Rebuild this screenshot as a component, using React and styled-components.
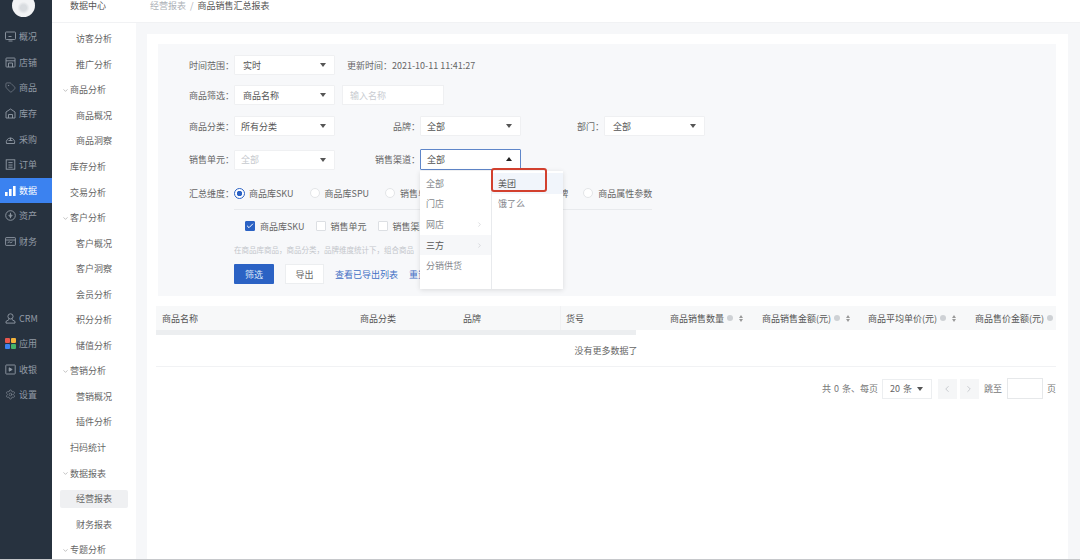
import React from 'react';
import styled, { createGlobalStyle } from 'styled-components';
import { Tag, ChevronDown, ChevronRight, ChevronLeft, Check, Settings } from 'lucide-react';

const GlobalStyle = createGlobalStyle`
  html, body { margin: 0; height: 100%; overflow: hidden; }
  body { font-family: "Noto Sans CJK SC", "Liberation Sans", sans-serif; background: #f6f7f9; }
  *, *::before, *::after { box-sizing: border-box; }
`;

const Page = styled.div`
  display: flex;
  width: 1080px;
  height: 560px;
  overflow: hidden;
  border-bottom: 1px solid #c6c8cb;
`;

const Rail = styled.nav`
  width: 52px;
  flex: none;
  background: #27323f;
  display: flex;
  flex-direction: column;
`;

const Logo = styled.div`
  width: 23px;
  height: 23px;
  margin: -6px 0 7px 12px;
  border-radius: 50%;
  background: radial-gradient(circle at 50% 60%, #d9dce0 0, #d9dce0 3px, #f2f3f5 6px);
  flex: none;
`;

const RailGroup = styled.div`
  display: flex;
  flex-direction: column;
  margin-bottom: ${(p) => p.$gap || 0}px;
`;

const RailItem = styled.div`
  height: 25.6px;
  display: flex;
  align-items: center;
  gap: 3px;
  padding-left: 5px;
  font-size: 9px;
  color: ${(p) => (p.$active ? '#ffffff' : '#929ba6')};
  background: ${(p) => (p.$active ? '#3b82f0' : 'transparent')};
`;

const SubMenu = styled.aside`
  width: 84px;
  flex: none;
  background: #ffffff;
  display: flex;
  flex-direction: column;
`;

const SubTitle = styled.div`
  height: 24px;
  margin-top: -1px;
  flex: none;
  border-bottom: 1px solid #f1f2f4;
  padding: 0 0 10px 18px;
  display: flex;
  align-items: center;
  font-size: 9px;
  color: #555;
`;

const SubList = styled.div`
  padding-top: 3px;
  display: flex;
  flex-direction: column;
`;

const SubItem = styled.div`
  flex: none;
  margin-left: 8px;
  width: 68px;
  border-radius: 2px;
  display: flex;
  align-items: center;
  font-size: 9px;
  color: #666;
  padding-left: ${(p) => (p.$level === 1 ? 16 : 10)}px;
  position: relative;
  background: ${(p) => (p.$active ? '#eff0f2' : 'transparent')};
  height: ${(p) => (p.$active ? '18px' : '25.55px')};
  margin-top: ${(p) => (p.$active ? '3.8px' : '0')};
  margin-bottom: ${(p) => (p.$active ? '3.75px' : '0')};
`;

const Caret = styled(ChevronDown)`
  position: absolute;
  left: 2px;
  top: 50%;
  margin-top: -3px;
  width: 7px;
  height: 7px;
  color: #777;
`;

const Content = styled.div`
  flex: 1;
  min-width: 0;
  display: flex;
  flex-direction: column;
`;

const TopBar = styled.header`
  height: 23px;
  flex: none;
  background: #fff;
  border-bottom: 1px solid #f1f2f4;
  display: flex;
  align-items: flex-start;
  gap: 4px;
  padding: 0 0 0 14px;
  font-size: 9px;
  line-height: 11px;
  color: #aeb2b8;
`;

const Crumb = styled.span`
  color: ${(p) => (p.$current ? '#555' : '#aeb2b8')};
`;

const Workspace = styled.main`
  flex: 1;
  padding: 11px 12px 0 11px;
  min-height: 0;
`;

const Card = styled.section`
  background: #fff;
  height: 100%;
  padding: 10px 12px 0 11px;
`;

const FilterPanel = styled.div`
  background: #f7f8fa;
  height: 252px;
  padding-top: 11px;
`;

const FormRow = styled.div`
  display: flex;
  align-items: center;
  height: ${(p) => p.$h || 20}px;
  margin-bottom: ${(p) => p.$mb || 0}px;
  font-size: 9px;
`;

const FieldLabel = styled.label`
  width: ${(p) => p.$w || 76}px;
  flex: none;
  text-align: right;
  color: #666;
  white-space: nowrap;
`;

const SelectBox = styled.div`
  position: relative;
  width: 101px;
  height: ${(p) => (p.$open ? 21 : 20)}px;
  flex: none;
  background: #fff;
  border: 1px solid ${(p) => (p.$open ? '#5f86c9' : '#eff0f2')};
  border-radius: 1px;
  display: flex;
  align-items: center;
  padding-left: ${(p) => (p.$tight ? 6 : 8)}px;
  color: ${(p) => (p.$muted ? '#c6c9ce' : '#555')};
`;

const Arrow = styled.i`
  position: absolute;
  right: 8px;
  top: 7px;
  width: 6px;
  height: 4px;
  border-left: 3px solid transparent;
  border-right: 3px solid transparent;
  border-top: ${(p) => (p.$up ? '0' : '4px solid #555')};
  border-bottom: ${(p) => (p.$up ? '4px solid #222' : '0')};
`;

const TextInput = styled.div`
  width: 102px;
  height: 20px;
  margin-left: 7px;
  background: #fff;
  border: 1px solid #eff0f2;
  padding-left: 7px;
  display: flex;
  align-items: center;
  color: #c9ccd1;
`;

const UpdateTime = styled.span`
  margin-left: 12px;
  color: #666;
`;

const Radio = styled.span`
  display: inline-flex;
  align-items: center;
  gap: ${(p) => (p.$on ? 4 : 5)}px;
  color: #666;
  margin-right: ${(p) => p.$mr || 0}px;
  white-space: nowrap;
  &::before {
    content: '';
    width: ${(p) => (p.$on ? 11 : 10)}px;
    height: ${(p) => (p.$on ? 11 : 10)}px;
    border-radius: 50%;
    background: ${(p) => (p.$on ? 'radial-gradient(circle, #2b62c4 0, #2b62c4 2.5px, #fff 3px)' : '#fff')};
    border: 1px solid ${(p) => (p.$on ? '#2b62c4' : '#e3e5e8')};
  }
`;

const Divider = styled.div`
  width: 418px;
  height: 1px;
  background: #e8eaed;
  margin: 9px 0 9px 76px;
`;

const CheckRow = styled.div`
  display: flex;
  align-items: center;
  height: 14px;
  padding-left: 87px;
  font-size: 9px;
  color: #666;
`;

const CheckItem = styled.span`
  display: inline-flex;
  align-items: center;
  gap: 5px;
  margin-right: 11px;
  white-space: nowrap;
`;

const Tick = styled.span`
  width: 10px;
  height: 10px;
  display: inline-flex;
  align-items: center;
  justify-content: center;
  border: 1px solid ${(p) => (p.$on ? '#2b62c4' : '#dcdfe3')};
  border-radius: 1px;
  background: ${(p) => (p.$on ? '#2b62c4' : '#fff')};
  color: #fff;
`;

const Hint = styled.div`
  font-size: 7.5px;
  color: #c3c6cb;
  margin: 11px 0 0 76px;
  height: 11px;
  line-height: 11px;
  white-space: nowrap;
`;

const Actions = styled.div`
  display: flex;
  align-items: center;
  margin: 9px 0 0 76px;
  height: 20px;
  font-size: 9px;
`;

const PrimaryButton = styled.button`
  width: 40px;
  height: 20px;
  padding: 0;
  border: 0;
  border-radius: 1px;
  font: inherit;
  background: #2b62c4;
  color: #dbe6f8;
`;

const PlainButton = styled.button`
  width: 39px;
  height: 20px;
  padding: 0;
  margin: 0 11px;
  border: 1px solid #eceef0;
  font: inherit;
  background: #fff;
  color: #666;
`;

const TextLink = styled.span`
  color: #3f6fc4;
  margin-right: 11px;
  white-space: nowrap;
`;

const Cascader = styled.div`
  position: absolute;
  left: -1px;
  top: 21px;
  width: 143px;
  height: 118px;
  background: #fff;
  display: flex;
  box-shadow: 0 1px 5px rgba(0, 0, 0, 0.12);
  z-index: 5;
`;

const CascaderColumn = styled.div`
  width: ${(p) => (p.$first ? 72 : 71)}px;
  padding-top: 2px;
  border-right: ${(p) => (p.$first ? '1px solid #e8eaed' : '0')};
`;

const CascaderItem = styled.div`
  height: 20.6px;
  display: flex;
  align-items: center;
  justify-content: space-between;
  padding: 0 8px 0 6px;
  color: ${(p) => (p.$strong ? '#555' : '#85888d')};
  background: ${(p) => (p.$hover ? '#f6f7f9' : p.$picked ? '#f1f5fb' : 'transparent')};
`;

const CalloutBox = styled.div`
  position: absolute;
  left: 71px;
  top: -3px;
  width: 56px;
  height: 24px;
  border: 2px solid #d2402e;
  border-radius: 3px;
`;

const TableWrap = styled.div`
  margin: 10px 0 0 -2px;
  width: 900px;
  position: relative;
`;

const HeadRow = styled.div`
  display: grid;
  grid-template-columns: 199px 103px 102px 104px 92px 106px 107px 87px;
  height: 24px;
  background: #f7f8f9;
  font-size: 9px;
  color: #555;
`;

const HeadCell = styled.div`
  display: flex;
  align-items: center;
  gap: 3px;
  padding-left: ${(p) => p.$pl ?? 5}px;
  white-space: nowrap;
  overflow: hidden;
  border-left: ${(p) => (p.$line ? '1px solid #f0f1f3' : '0')};
`;

const Dot = styled.i`
  width: 6px;
  height: 6px;
  border-radius: 50%;
  background: #ced1d5;
  flex: none;
`;

const Sorter = styled.i`
  display: inline-flex;
  flex-direction: column;
  gap: 1px;
  flex: none;
  margin-left: 3px;
  &::before, &::after {
    content: '';
    width: 4px;
    height: 3px;
    border-left: 2px solid transparent;
    border-right: 2px solid transparent;
  }
  &::before { border-bottom: 3px solid #999; }
  &::after { border-top: 3px solid #999; }
`;

const ScrollTrack = styled.div`
  width: 480px;
  height: 5px;
  background: #eceef0;
`;

const EmptyRow = styled.div`
  height: 32px;
  border-bottom: 1px solid #f1f2f4;
  display: flex;
  align-items: center;
  justify-content: center;
  font-size: 9px;
  color: #666;
`;

const Pager = styled.div`
  display: flex;
  align-items: center;
  justify-content: flex-end;
  margin-top: 11px;
  height: 21px;
  font-size: 9px;
  word-spacing: 1px;
  color: #777;
`;

const PageSelect = styled.div`
  position: relative;
  width: 50px;
  height: 20px;
  margin: 0 6px 0 4px;
  border: 1px solid #eceef0;
  display: flex;
  align-items: center;
  padding-left: 7px;
  color: #666;
`;

const PageButton = styled.div`
  width: 19px;
  height: 20px;
  margin-right: ${(p) => p.$mr || 0}px;
  background: #f5f6f7;
  color: #bfc3c8;
  display: flex;
  align-items: center;
  justify-content: center;
`;

const JumpInput = styled.div`
  width: 36px;
  height: 21px;
  margin: 0 4px 0 5px;
  border: 1px solid #e6e8ea;
  background: #fff;
`;

const RailSvg = ({ children }) => (
  <svg width="11" height="11" viewBox="0 0 11 11" fill="none" stroke="currentColor" strokeWidth="0.9">
    {children}
  </svg>
);

const OverviewIcon = () => (
  <RailSvg>
    <rect x="0.5" y="1" width="10" height="7.5" rx="0.8" />
    <path d="M3.5 10h4M3.5 5.5h3" />
  </RailSvg>
);

const StoreIcon = () => (
  <RailSvg>
    <rect x="1" y="1" width="9" height="9" rx="0.6" />
    <path d="M1 3.8h9M3.5 10V6h4v4" />
  </RailSvg>
);

const StockIcon = () => (
  <RailSvg>
    <path d="M1 10V4l4.5-3L10 4v6z" />
    <path d="M3.5 10V6.5h4V10" />
  </RailSvg>
);

const PurchaseIcon = () => (
  <RailSvg>
    <path d="M1.5 9.5a4.2 4.2 0 1 1 8 0z" />
    <path d="M3.5 6.5h4M5.5 3.8v2.7" />
  </RailSvg>
);

const OrderIcon = () => (
  <RailSvg>
    <rect x="1.2" y="0.8" width="8.6" height="9.4" />
    <path d="M3.4 3.6h4.2M3.4 6h4.2M3.4 8.2h4.2" />
  </RailSvg>
);

const AssetIcon = () => (
  <RailSvg>
    <circle cx="5.5" cy="5.5" r="4.8" />
    <path d="M5.5 2.8v5.4M3.8 5.2h3.4L5.5 7.2z" />
  </RailSvg>
);

const FinanceIcon = () => (
  <RailSvg>
    <rect x="0.6" y="1.6" width="9.8" height="7.8" rx="0.6" />
    <path d="M0.6 4h9.8M2.6 6.8l1.6-1 1.6 1 1.6-1" />
  </RailSvg>
);

const CrmIcon = () => (
  <RailSvg>
    <circle cx="5.5" cy="3.4" r="2.6" />
    <path d="M3.8 5.6v1.2L1 8.4v1.7h9V8.4L7.2 6.8V5.6" />
  </RailSvg>
);

const CashierIcon = () => (
  <RailSvg>
    <rect x="0.8" y="1" width="9.4" height="9" rx="0.5" />
    <path d="M4.2 3.8l3 1.7-3 1.7z" fill="currentColor" />
  </RailSvg>
);

const AppIcon = () => (
  <svg width="11" height="11" viewBox="0 0 11 11">
    <rect width="5" height="5" rx="1" fill="#e8584f" />
    <rect x="6" width="5" height="5" rx="1" fill="#f4b33c" />
    <rect y="6" width="5" height="5" rx="1" fill="#3b82f0" />
    <rect x="6" y="6" width="5" height="5" rx="1" fill="#45b36b" />
  </svg>
);

const BarsIcon = () => (
  <svg width="11" height="11" viewBox="0 0 11 11" fill="#fff">
    <rect x="0" y="7" width="2.6" height="4" />
    <rect x="4" y="4" width="2.6" height="7" />
    <rect x="8" y="1" width="2.6" height="10" />
  </svg>
);

const railTop = [
  { icon: <OverviewIcon />, label: '概况' },
  { icon: <StoreIcon />, label: '店铺' },
  { icon: <Tag size={11} strokeWidth={1.2} />, label: '商品' },
  { icon: <StockIcon />, label: '库存' },
  { icon: <PurchaseIcon />, label: '采购' },
  { icon: <OrderIcon />, label: '订单' },
  { icon: <BarsIcon />, label: '数据', active: true },
  { icon: <AssetIcon />, label: '资产' },
  { icon: <FinanceIcon />, label: '财务' },
];

const railBottom = [
  { icon: <CrmIcon />, label: 'CRM' },
  { icon: <AppIcon />, label: '应用' },
  { icon: <CashierIcon />, label: '收银' },
  { icon: <Settings size={11} strokeWidth={1.2} />, label: '设置' },
];

const subItems = [
  { label: '访客分析', level: 1 },
  { label: '推广分析', level: 1 },
  { label: '商品分析', open: true },
  { label: '商品概况', level: 1 },
  { label: '商品洞察', level: 1 },
  { label: '库存分析' },
  { label: '交易分析' },
  { label: '客户分析', open: true },
  { label: '客户概况', level: 1 },
  { label: '客户洞察', level: 1 },
  { label: '会员分析', level: 1 },
  { label: '积分分析', level: 1 },
  { label: '储值分析', level: 1 },
  { label: '营销分析', open: true },
  { label: '营销概况', level: 1 },
  { label: '插件分析', level: 1 },
  { label: '扫码统计' },
  { label: '数据报表', open: true },
  { label: '经营报表', level: 1, active: true },
  { label: '财务报表', level: 1 },
  { label: '专题分析', open: true },
];

const columns = [
  { label: '商品名称', pl: 6 },
  { label: '商品分类' },
  { label: '品牌' },
  { label: '货号', line: true },
  { label: '商品销售数量', sort: true, pl: 6 },
  { label: '商品销售金额(元)', sort: true, pl: 6 },
  { label: '商品平均单价(元)', sort: true, pl: 6 },
  { label: '商品售价金额(元)', sort: false, pl: 6 },
];

const App = () => {
  return (
    <Page>
      <GlobalStyle />
      <Rail>
        <Logo />
        <RailGroup $gap={51}>
          {railTop.map((item) => (
            <RailItem key={item.label} $active={item.active}>{item.icon}{item.label}</RailItem>
          ))}
        </RailGroup>
        <RailGroup>
          {railBottom.map((item) => (
            <RailItem key={item.label}>{item.icon}{item.label}</RailItem>
          ))}
        </RailGroup>
      </Rail>

      <SubMenu>
        <SubTitle>数据中心</SubTitle>
        <SubList>
          {subItems.map((item) => (
            <SubItem key={item.label} $level={item.level} $active={item.active}>
              {item.open && <Caret strokeWidth={1.5} />}
              {item.label}
            </SubItem>
          ))}
        </SubList>
      </SubMenu>

      <Content>
        <TopBar>
          <Crumb>经营报表</Crumb>
          <Crumb>/</Crumb>
          <Crumb $current>商品销售汇总报表</Crumb>
        </TopBar>
        <Workspace>
          <Card>
            <FilterPanel>
              <FormRow $mb={10}>
                <FieldLabel>时间范围：</FieldLabel>
                <SelectBox>实时<Arrow /></SelectBox>
                <UpdateTime>更新时间：2021-10-11 11:41:27</UpdateTime>
              </FormRow>
              <FormRow $mb={11}>
                <FieldLabel>商品筛选：</FieldLabel>
                <SelectBox>商品名称<Arrow /></SelectBox>
                <TextInput>输入名称</TextInput>
              </FormRow>
              <FormRow $mb={13}>
                <FieldLabel>商品分类：</FieldLabel>
                <SelectBox $tight>所有分类<Arrow /></SelectBox>
                <FieldLabel $w={85}>品牌：</FieldLabel>
                <SelectBox $tight>全部<Arrow /></SelectBox>
                <FieldLabel $w={83}>部门：</FieldLabel>
                <SelectBox>全部<Arrow /></SelectBox>
              </FormRow>
              <FormRow $h={21} $mb={16}>
                <FieldLabel>销售单元：</FieldLabel>
                <SelectBox $muted $tight>全部<Arrow /></SelectBox>
                <FieldLabel $w={85}>销售渠道：</FieldLabel>
                <SelectBox $open $tight>
                  全部<Arrow $up />
                  <Cascader>
                    <CascaderColumn $first>
                      <CascaderItem>全部</CascaderItem>
                      <CascaderItem>门店</CascaderItem>
                      <CascaderItem>网店<ChevronRight size={7} color="#c4c7cc" /></CascaderItem>
                      <CascaderItem $hover $strong>三方<ChevronRight size={7} color="#c4c7cc" /></CascaderItem>
                      <CascaderItem>分销供货</CascaderItem>
                    </CascaderColumn>
                    <CascaderColumn>
                      <CascaderItem $picked $strong>美团</CascaderItem>
                      <CascaderItem>饿了么</CascaderItem>
                    </CascaderColumn>
                    <CalloutBox />
                  </Cascader>
                </SelectBox>
              </FormRow>
              <FormRow $h={14}>
                <FieldLabel>汇总维度：</FieldLabel>
                <Radio $on $mr={16}>商品库SKU</Radio>
                <Radio $mr={16}>商品库SPU</Radio>
                <Radio $mr={99}>销售单元</Radio>
                <Radio $mr={15}>品牌</Radio>
                <Radio>商品属性参数</Radio>
              </FormRow>
              <Divider />
              <CheckRow>
                <CheckItem><Tick $on><Check size={8} strokeWidth={3} /></Tick>商品库SKU</CheckItem>
                <CheckItem><Tick />销售单元</CheckItem>
                <CheckItem><Tick />销售渠道</CheckItem>
              </CheckRow>
              <Hint>在商品库商品，商品分类，品牌维度统计下，组合商品</Hint>
              <Actions>
                <PrimaryButton>筛选</PrimaryButton>
                <PlainButton>导出</PlainButton>
                <TextLink>查看已导出列表</TextLink>
                <TextLink>重置</TextLink>
              </Actions>
            </FilterPanel>

            <TableWrap>
              <HeadRow>
                {columns.map((col) => (
                  <HeadCell key={col.label} $line={col.line} $pl={col.pl}>
                    {col.label}
                    {col.sort !== undefined && <Dot />}
                    {col.sort && <Sorter />}
                  </HeadCell>
                ))}
              </HeadRow>
              <ScrollTrack />
              <EmptyRow>没有更多数据了</EmptyRow>
              <Pager>
                共 0 条、每页
                <PageSelect>20 条<Arrow /></PageSelect>
                <PageButton $mr={3}><ChevronLeft size={10} /></PageButton>
                <PageButton $mr={5}><ChevronRight size={10} /></PageButton>
                跳至
                <JumpInput />
                页
              </Pager>
            </TableWrap>
          </Card>
        </Workspace>
      </Content>
    </Page>
  );
};

export default App;
